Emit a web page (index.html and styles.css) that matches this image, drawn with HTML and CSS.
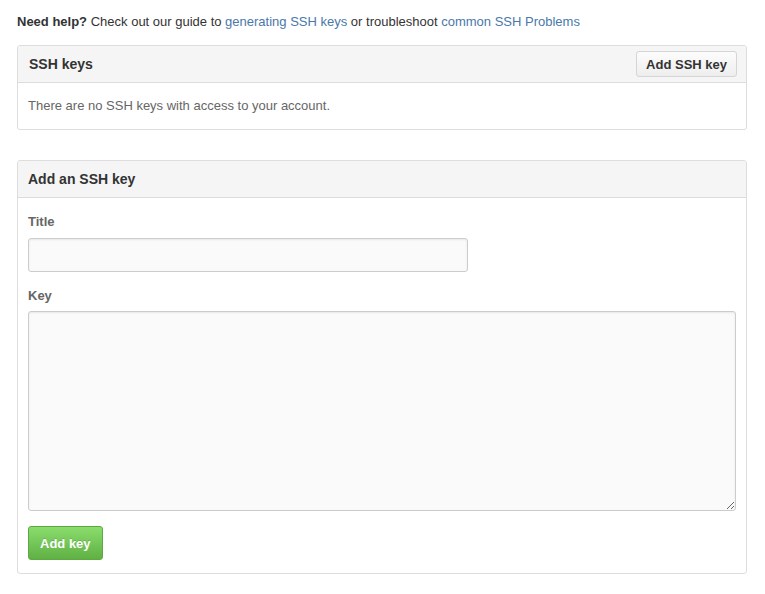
FILE: index.html
```html
<!DOCTYPE html>
<html>
<head>
<meta charset="utf-8">
<link rel="stylesheet" href="styles.css">
</head>
<body>
<p class="help"><strong>Need help?</strong> Check out our guide to <a href="#">generating SSH keys</a> or troubleshoot <a href="#">common SSH Problems</a></p>

<div class="box">
  <div class="box-header">
    <h3 class="box-title">SSH keys</h3>
    <button class="btn">Add SSH key</button>
  </div>
  <div class="box-body empty">There are no SSH keys with access to your account.</div>
</div>

<div class="box box-form">
  <div class="box-header header-plain">
    <h3 class="box-title">Add an SSH key</h3>
  </div>
  <div class="box-body form">
    <label class="label">Title</label>
    <input class="input" type="text">
    <label class="label label-key">Key</label>
    <textarea class="textarea"></textarea>
    <div class="actions"><button class="btn-primary">Add key</button></div>
  </div>
</div>
</body>
</html>
```

FILE: styles.css
```css
html, body {
  margin: 0;
  padding: 0;
  background: #fff;
}
body {
  padding: 0 18px 0 17px;
  font-family: "Liberation Sans", Arial, sans-serif;
  font-size: 13px;
  color: #333;
}
.help {
  margin: 0;
  padding-top: 13px;
  line-height: 17px;
  color: #333;
}
.help strong {
  font-weight: bold;
}
.help a {
  color: #4a78ab;
  text-decoration: none;
}
.box {
  margin-top: 15px;
  border: 1px solid #ddd;
  border-radius: 3px;
}
.box-form {
  margin-top: 30px;
}
.box-header {
  display: flex;
  align-items: center;
  justify-content: space-between;
  height: 36px;
  padding: 0 9px 0 11px;
  background: #f5f5f5;
  border-bottom: 1px solid #ddd;
  border-radius: 3px 3px 0 0;
}
.header-plain {
  padding-left: 10px;
}
.box-title {
  margin: 0;
  font-size: 14px;
  font-weight: bold;
  color: #333;
}
.btn {
  height: 26px;
  padding: 0 9px;
  font-family: "Liberation Sans", Arial, sans-serif;
  font-size: 13px;
  font-weight: bold;
  color: #333;
  background: linear-gradient(#fcfcfc, #eee);
  border: 1px solid #d5d5d5;
  border-radius: 3px;
  white-space: nowrap;
}
.box-body {
  padding: 0 10px;
}
.empty {
  height: 46px;
  line-height: 46px;
  color: #666;
}
.form {
  display: flex;
  flex-direction: column;
  align-items: flex-start;
  padding-top: 14px;
  padding-bottom: 13px;
}
.label {
  display: block;
  font-size: 13px;
  font-weight: bold;
  color: #666;
  line-height: 19px;
  margin-bottom: 7px;
}
.label-key {
  margin-top: 14px;
  margin-bottom: 6px;
}
.input {
  box-sizing: border-box;
  width: 440px;
  height: 34px;
  margin: 0;
  background: #fafafa;
  border: 1px solid #ccc;
  border-radius: 3px;
  box-shadow: inset 0 1px 2px rgba(0,0,0,0.075);
}
.textarea {
  box-sizing: border-box;
  width: 708px;
  height: 200px;
  margin: 0;
  background: #fafafa;
  border: 1px solid #ccc;
  border-radius: 3px;
  box-shadow: inset 0 1px 2px rgba(0,0,0,0.075);
  resize: both;
  display: block;
}
.actions {
  margin-top: 15px;
}
.btn-primary {
  display: block;
  height: 34px;
  padding: 0 11px;
  white-space: nowrap;
  font-family: "Liberation Sans", Arial, sans-serif;
  font-size: 13px;
  font-weight: bold;
  color: #fff;
  text-shadow: 0 -1px 0 rgba(0,0,0,0.15);
  background: linear-gradient(#8add6d, #60b044);
  border: 1px solid #5ca941;
  border-radius: 3px;
}
```
